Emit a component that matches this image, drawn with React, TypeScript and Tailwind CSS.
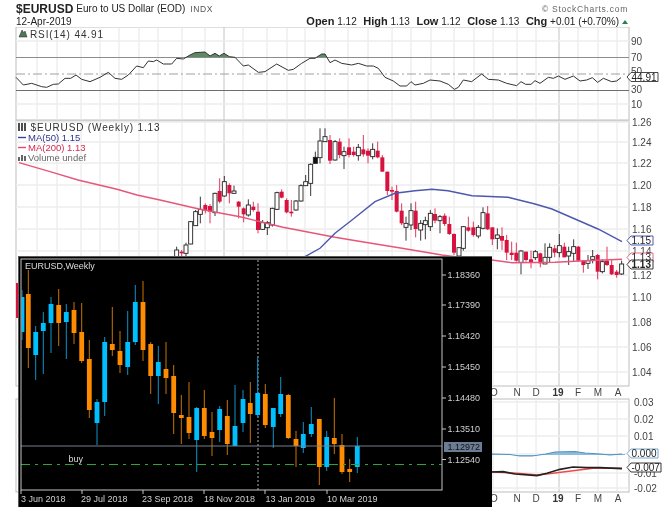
import React from "react";

// vertical grid lines of the StockCharts panes
const gridX = [37, 57, 81, 100, 119, 139, 158, 182, 205, 224, 243, 267, 287, 305, 325, 348, 368, 392, 411, 431, 454, 474, 493, 517, 536, 559, 578, 598, 617];
const priceLabels: [string, number][] = [["1.26", 122], ["1.24", 142], ["1.22", 163], ["1.20", 185], ["1.18", 207], ["1.16", 229], ["1.14", 251], ["1.12", 275], ["1.10", 297], ["1.08", 322], ["1.06", 347], ["1.04", 372]];
const macdLabels: [string, number][] = [["0.03", 402], ["0.02", 419], ["0.01", 436], ["-0.01", 473], ["-0.02", 488]];
const monthLabels: [string, number][] = [["N", 517], ["D", 536], ["F", 578], ["M", 598], ["A", 618]];

// RSI points, read at 3x from the reference
const rsiLeft = [[48, 232], [70, 255], [95, 250], [125, 260], [140, 262], [160, 253], [175, 252], [195, 235], [212, 235], [228, 225], [245, 238], [270, 245], [300, 232], [325, 217], [345, 235], [365, 238], [385, 225], [410, 198], [430, 203], [445, 183], [460, 185], [470, 180], [490, 192], [515, 192], [530, 175], [550, 177], [570, 165], [585, 158], [615, 156], [630, 168], [645, 160], [658, 168], [672, 160], [688, 170], [705, 172], [730, 198], [745, 195], [775, 217], [795, 215], [830, 192], [865, 211], [880, 208], [905, 190], [930, 175], [945, 175], [965, 162], [975, 162], [990, 188]];
const rsiRight = [[0, 180], [20, 190], [50, 195], [70, 190], [95, 198], [115, 198], [130, 205], [150, 232], [175, 243], [195, 258], [215, 258], [228, 245], [240, 255], [265, 250], [285, 240], [315, 243], [340, 253], [358, 268], [370, 262], [385, 240], [410, 245], [440, 222], [460, 238], [490, 240], [515, 250], [545, 257], [558, 245], [572, 253], [588, 253], [600, 242], [615, 250], [640, 232], [655, 235], [670, 228], [690, 238], [715, 228], [735, 243], [755, 240], [772, 233], [788, 247], [805, 235], [830, 245], [845, 243], [858, 233]];
const rsiLine = [...rsiLeft.map(([x, y]) => `${x / 3},${y / 3}`), ...rsiRight.map(([x, y]) => `${335 + x / 3},${y / 3}`)].join(" ");

const ma200 = "19,162.7 50,171.7 78,180 117,189.3 137,195 160,200 200,209.3 240,216.7 283,227.3 335,237.3 362,241.7 402,248.3 442,255 455,256.7 492,260 512,262.7 555,262.3 585,260.7 622,259.3";
const ma50 = "305,256.7 320,248.3 335,233.3 352,220 375,201.7 395,193.3 415,190.7 432,189.3 448,190.7 472,195.7 508,197.3 535,204 552,209 575,219 598,229 622,241.7";
const macdBlack = "492,472 503,471.7 515,474 537,475.7 547,473.3 560,469.3 573,467 587,467.7 600,467.7 622,468.7";
const macdRed = "492,471.7 523,473.7 537,475 553,473.3 573,470.7 593,468.3 622,468.3";

// [x, wick top, body top, body bottom, wick bottom, kind] in 3x reference units
type Bar = [number, number, number, number, number, "w" | "r" | "k"];
const barsLeft: Bar[] = [
  [530, 380, 390, 410, 410, "w"], [545, 390, 395, 400, 410, "r"], [558, 368, 375, 400, 410, "w"], [572, 303, 305, 372, 373, "w"], [587, 270, 275, 317, 318, "w"], [601, 230, 268, 283, 310, "w"],
  [616, 250, 255, 272, 280, "r"], [630, 252, 258, 275, 310, "r"], [645, 218, 220, 278, 288, "w"], [659, 175, 213, 245, 250, "r"], [673, 168, 185, 228, 230, "w"], [688, 190, 195, 220, 250, "r"],
  [702, 197, 213, 220, 220, "w"], [716, 243, 245, 260, 295, "r"], [731, 262, 265, 283, 307, "r"], [745, 238, 255, 285, 290, "w"], [760, 245, 260, 270, 275, "r"], [774, 250, 275, 330, 340, "r"],
  [788, 300, 308, 328, 330, "w"], [802, 303, 308, 323, 345, "w"], [817, 263, 265, 315, 320, "w"], [831, 215, 218, 268, 270, "w"], [845, 208, 215, 233, 235, "r"], [860, 235, 240, 277, 280, "r"],
  [874, 240, 275, 280, 290, "r"], [888, 240, 243, 270, 272, "w"], [903, 193, 197, 243, 245, "w"], [917, 165, 185, 197, 197, "w"], [932, 130, 133, 190, 228, "w"], [946, 95, 112, 130, 130, "k"],
  [960, 25, 63, 113, 130, "w"], [975, 25, 50, 65, 65, "w"], [990, 45, 60, 122, 132, "r"],
];
const barsRight: Bar[] = [
  [0, 60, 65, 120, 122, "w"], [14, 55, 65, 105, 115, "r"], [27, 80, 95, 107, 147, "w"], [42, 55, 82, 105, 112, "r"], [56, 80, 95, 105, 110, "r"], [70, 72, 82, 107, 122, "w"], [85, 45, 88, 103, 110, "r"],
  [99, 85, 92, 107, 130, "r"], [113, 70, 88, 110, 118, "w"], [128, 65, 92, 112, 115, "r"], [142, 105, 112, 155, 155, "r"], [157, 155, 155, 213, 225, "r"], [171, 200, 210, 215, 240, "r"],
  [185, 195, 213, 275, 277, "r"], [200, 250, 272, 310, 315, "r"], [213, 290, 310, 322, 362, "w"], [228, 250, 272, 315, 330, "w"], [242, 245, 272, 327, 352, "r"], [257, 300, 310, 330, 362, "w"],
  [271, 290, 302, 314, 358, "w"], [286, 270, 280, 320, 333, "w"], [300, 265, 282, 302, 310, "r"], [315, 285, 290, 302, 340, "w"], [329, 280, 287, 312, 318, "r"], [343, 290, 312, 342, 345, "r"],
  [357, 340, 342, 398, 405, "r"], [372, 383, 383, 408, 408, "w"], [385, 318, 320, 385, 392, "w"], [400, 290, 322, 332, 335, "r"], [415, 305, 322, 345, 350, "r"], [430, 315, 322, 348, 355, "w"],
  [444, 262, 278, 325, 328, "w"], [458, 258, 280, 328, 330, "r"], [472, 322, 322, 358, 375, "r"], [487, 325, 345, 355, 388, "w"], [501, 322, 348, 362, 390, "r"], [515, 345, 360, 398, 420, "r"],
  [530, 365, 398, 405, 420, "r"], [544, 368, 398, 422, 425, "r"], [558, 390, 393, 427, 463, "w"], [573, 395, 395, 420, 425, "r"], [588, 392, 418, 428, 445, "r"], [601, 390, 395, 413, 420, "w"],
  [616, 398, 400, 430, 442, "r"], [630, 370, 412, 432, 432, "w"], [644, 370, 382, 412, 428, "w"], [659, 375, 385, 398, 412, "r"], [673, 342, 377, 398, 412, "w"], [688, 368, 380, 412, 412, "r"],
  [701, 380, 395, 408, 435, "w"], [716, 358, 380, 400, 425, "w"], [730, 378, 380, 422, 425, "r"], [745, 420, 422, 435, 458, "r"], [759, 405, 422, 430, 447, "w"], [773, 390, 410, 418, 430, "w"],
  [788, 402, 405, 455, 478, "r"], [802, 418, 425, 455, 460, "w"], [816, 380, 422, 435, 438, "r"], [830, 420, 435, 463, 465, "r"], [845, 450, 455, 465, 473, "r"], [860, 422, 432, 462, 465, "w"],
];

// metatrader window candles, real pixels: [x, wick top, body top, body bottom, wick bottom, kind]
type Mt = [number, number, number, number, number, "o" | "b"];
const mtBars: Mt[] = [
  [22, 290, 297, 332, 340, "b"], [28.3, 270, 294, 348, 368, "o"], [35.7, 326, 332, 355, 380, "b"], [43.3, 312, 323, 331, 374, "b"], [51, 297, 304, 323, 353, "b"], [58.7, 289, 305, 323, 346, "o"],
  [66.3, 304, 312, 322, 359, "b"], [74, 302, 310, 333, 344, "o"], [81.7, 303, 332, 361, 363, "o"], [89.3, 340, 359, 410, 418, "o"], [97, 399, 402, 423, 445, "b"], [104.7, 337, 342, 402, 416, "b"],
  [112.3, 307, 344, 350, 356, "o"], [120, 331, 351, 365, 373, "o"], [127.7, 311, 342, 367, 375, "b"], [135.3, 285, 302, 342, 345, "b"], [143, 281, 302, 350, 361, "o"], [150.7, 342, 344, 376, 394, "o"],
  [158.3, 346, 362, 376, 404, "b"], [166, 342, 369, 378, 394, "o"], [173.7, 365, 376, 413, 434, "o"], [181.3, 395, 415, 418, 444, "o"], [189, 382, 417, 433, 439, "o"], [196.7, 407, 408, 440, 472, "b"],
  [204.3, 390, 408, 436, 439, "o"], [212, 412, 432, 438, 456, "o"], [219.7, 406, 409, 430, 442, "b"], [227.3, 400, 416, 444, 455, "o"], [235, 385, 426, 446, 446, "b"], [243, 390, 399, 423, 432, "b"],
  [250.3, 382, 403, 414, 443, "o"], [257.7, 358, 393, 415, 417, "b"], [265.3, 384, 394, 425, 428, "o"], [273.3, 408, 408, 427, 448, "b"], [280.7, 377, 394, 414, 417, "b"], [288.3, 394, 395, 438, 439, "o"],
  [296, 431, 439, 446, 467, "o"], [303.3, 422, 434, 448, 453, "b"], [311.3, 407, 424, 434, 437, "b"], [319.3, 419, 419, 467, 485, "o"], [326.7, 431, 437, 467, 471, "b"], [334.3, 398, 438, 444, 454, "o"],
  [342, 434, 445, 472, 474, "o"], [349.7, 459, 469, 472, 482, "o"], [357.3, 437, 446, 467, 473, "b"],
];
const mtPrices: [string, number][] = [["1.18360", 275], ["1.17390", 305], ["1.16420", 336], ["1.15450", 367], ["1.14480", 398], ["1.13510", 429], ["1.12540", 459.5]];
const mtDates: [string, number, number][] = [["3 Jun 2018", 21, 21], ["29 Jul 2018", 81, 82], ["23 Sep 2018", 142, 143], ["18 Nov 2018", 204, 204], ["13 Jan 2019", 265.5, 265], ["10 Mar 2019", 327, 327]];

function StockBar({ bar, ox, oy }: { bar: Bar; ox: number; oy: number }) {
  const [xz, wt, bt, bb, wb, kind] = bar;
  const x = ox + xz / 3;
  const wick = kind === "r" ? "#e0204c" : "#222";
  const fill = kind === "w" ? "#fff" : kind === "r" ? "#d8123e" : "#111";
  return (
    <g>
      <line x1={x} x2={x} y1={oy + wt / 3} y2={oy + wb / 3} stroke={wick} strokeWidth="0.9" />
      <rect x={x - 2} y={oy + bt / 3} width="4" height={Math.max((bb - bt) / 3, 1)} fill={fill} stroke={kind === "r" ? "none" : "#222"} strokeWidth="0.9" />
    </g>
  );
}

function Tag({ x, y, w, label, color, bold }: { x: number; y: number; w: number; label: string; color: string; bold?: boolean }) {
  return (
    <g>
      <polygon points={`${x},${y} ${x + 4},${y - 4.5} ${x + w},${y - 4.5} ${x + w},${y + 4.5} ${x + 4},${y + 4.5}`} fill="#fff" stroke={color} strokeWidth="0.9" />
      <text x={x + 4.5} y={y + 3.5} fontSize="10" fill="#222" fontWeight={bold ? "bold" : "normal"}>{label}</text>
    </g>
  );
}

function StockChart() {
  return (
    <svg className="block w-[670px] h-[480px]" viewBox="0 27 670 480">
      <defs>
        <clipPath id="rsiTop"><rect x="16" y="27" width="613" height="30" /></clipPath>
      </defs>

      {/* panes */}
      {[[27, 93], [121, 265], [399, 93]].map(([top, h]) => (
        <rect key={top} x="16" y={top} width="613" height={h} fill="#fff" stroke="#bdbdbd" strokeWidth="1" />
      ))}
      {gridX.map((x) => {
        const strong = x === 224 || x === 559;
        return (
          <g key={x} stroke={strong ? "#c4c4c4" : "#e6e6e6"} strokeWidth="1">
            <line x1={x} x2={x} y1="27" y2="120" />
            <line x1={x} x2={x} y1="121" y2="386" />
            <line x1={x} x2={x} y1="399" y2="492" />
          </g>
        );
      })}
      {[41, 104, 122, 142, 163, 185, 207, 229, 251, 275, 297, 322, 347, 372, 402, 419, 436, 454, 473, 488].map((y) => (
        <line key={y} x1="16" x2="629" y1={y} y2={y} stroke="#ececec" strokeWidth="1.6" />
      ))}

      {/* RSI */}
      <polygon points={`16,90 ${rsiLine} 622,90`} fill="#5c8a62" clipPath="url(#rsiTop)" />
      <line x1="16" x2="629" y1="57.5" y2="57.5" stroke="#8c8c8c" />
      <line x1="16" x2="629" y1="74" y2="74" stroke="#a0a0a0" strokeDasharray="9 3 2 3" />
      <line x1="16" x2="629" y1="90.5" y2="90.5" stroke="#6e6e6e" />
      <polyline points={rsiLine} fill="none" stroke="#333" strokeWidth="1" />
      <path d="M19 37 L22 30 L24 33 L25 31 L27 37 Z" fill="#4d7a54" stroke="#222" strokeWidth="0.5" />
      <text x="30" y="37.5" fontSize="10" fill="#333" letterSpacing="0.9">RSI(14) 44.91</text>
      {[["90", 41], ["70", 57], ["30", 89], ["10", 104]].map(([t, y]) => (
        <text key={t} x="631" y={Number(y) + 3.5} fontSize="10" fill="#444">{t}</text>
      ))}
      <text x="631" y="75" fontSize="10" fill="#444">50</text>
      <Tag x={627} y={77} w={31} label="44.91" color="#333" />

      {/* price */}
      {barsLeft.map((b) => <StockBar key={`l${b[0]}`} bar={b} ox={0} oy={120} />)}
      {barsRight.map((b) => <StockBar key={`r${b[0]}`} bar={b} ox={335} oy={120} />)}
      <polyline points={ma200} fill="none" stroke="#e8557a" strokeWidth="1.4" />
      <polyline points={ma50} fill="none" stroke="#4c58ae" strokeWidth="1.4" />
      <rect x="16" y="283" width="2" height="35" fill="#d8123e" />

      <path d="M19 123 v8 M22 123 v8 M25 123 v8" stroke="#222" strokeWidth="1.6" />
      <text x="30.5" y="130.5" fontSize="10" fill="#333" letterSpacing="0.85">$EURUSD (Weekly) 1.13</text>
      <line x1="18" x2="26" y1="137.5" y2="137.5" stroke="#3b3f9e" strokeWidth="1.4" />
      <text x="28" y="141" fontSize="9.5" fill="#2d3590">MA(50) 1.15</text>
      <line x1="18" x2="26" y1="147.5" y2="147.5" stroke="#e8476f" strokeWidth="1.4" />
      <text x="28" y="151" fontSize="9.5" fill="#d8284f">MA(200) 1.13</text>
      <path d="M19 161 v-4 M22 161 v-6 M25 161 v-5" stroke="#666" strokeWidth="2" />
      <text x="28" y="161" fontSize="9.5" fill="#666">Volume undef</text>

      {priceLabels.map(([t, y]) => (
        <text key={t} x="632" y={y + 3.5} fontSize="10" fill="#444">{t}</text>
      ))}
      <Tag x={627} y={240.5} w={26} label="1.15" color="#3b46b0" />
      <Tag x={627} y={257.5} w={26} label="1.13" color="#e8557a" />
      <Tag x={627} y={264.5} w={26} label="1.13" color="#222" bold />

      {/* month labels of both panes */}
      {[396, 502].map((y) => (
        <g key={y} fontSize="10" fill="#444" textAnchor="middle">
          {monthLabels.map(([t, x]) => <text key={t} x={x} y={y}>{t}</text>)}
          <text x="558" y={y} fontWeight="bold" fill="#333">19</text>
          <text x="494" y={y}>O</text>
        </g>
      ))}

      {/* MACD */}
      <polygon points="492,454 510,454.5 520,456 532,456 546,454 555,452 575,451.5 585,453 600,454 625,454 625,455 492,455" fill="#8fbcd9" />
      <polyline points="492,454 510,454.5 520,456 532,456 546,454 555,452 575,451.5 585,453 600,454 610,455 622,454" fill="none" stroke="#4f94c0" strokeWidth="1.2" />
      <polyline points={macdRed} fill="none" stroke="#ee4a4a" strokeWidth="1.6" />
      <polyline points={macdBlack} fill="none" stroke="#222" strokeWidth="1.7" />
      {macdLabels.map(([t, y]) => (
        <text key={t} x="634" y={y + 3.5} fontSize="10" fill="#444">{t}</text>
      ))}
      <Tag x={627} y={453.5} w={31} label="0.000" color="#6b9fc8" />
      <Tag x={627} y={467.5} w={34} label="-0.007" color="#222" />
    </svg>
  );
}

function TerminalWindow() {
  return (
    <div className="absolute left-[18px] top-[256px] w-[474px] h-[251px] box-border bg-black border-t border-l border-[#5a5a5a]">
      <svg className="block w-[473px] h-[250px]" viewBox="19 257 473 250">
        <defs>
          <clipPath id="mtFrame"><rect x="21.5" y="259.5" width="420" height="230" /></clipPath>
        </defs>
        <line x1="258" x2="258" y1="260" y2="490" stroke="#b0b0b0" strokeDasharray="2 2" />
        <g clipPath="url(#mtFrame)">
          {mtBars.map(([x, wt, bt, bb, wb, kind]) => (
            <g key={x}>
              <line x1={x} x2={x} y1={wt} y2={wb} stroke={kind === "o" ? "#c97400" : "#0c93c8"} strokeWidth="1" />
              <rect x={x - 2.4} y={bt} width="4.8" height={bb - bt} fill={kind === "o" ? "#ff8c00" : "#00bfff"} />
            </g>
          ))}
        </g>
        <line x1="21" x2="442" y1="446" y2="446" stroke="#77808f" strokeWidth="1" />
        <line x1="21" x2="442" y1="464.5" y2="464.5" stroke="#2aa63a" strokeDasharray="9 5 3 5" />
        <rect x="21" y="259" width="421" height="231" fill="none" stroke="#c4c4c4" strokeWidth="1" />
        <text x="25" y="269" fontSize="9" fill="#ddd">EURUSD,Weekly</text>
        <text x="68.5" y="462" fontSize="9" fill="#ddd">buy</text>
        {mtPrices.map(([t, y]) => (
          <g key={t}>
            <line x1="442" x2="446" y1={y} y2={y} stroke="#c4c4c4" />
            <text x="447.5" y={y + 3.3} fontSize="9" fill="#d0d0d0">{t}</text>
          </g>
        ))}
        <rect x="444" y="442" width="38" height="10" fill="#6b7d96" />
        <text x="447.5" y="450.3" fontSize="9" fill="#111">1.12972</text>
        {mtDates.map(([t, x, tick]) => (
          <g key={t}>
            <line x1={tick} x2={tick} y1="490" y2="494" stroke="#c4c4c4" />
            <text x={x} y="502" fontSize="9" fill="#d0d0d0">{t}</text>
          </g>
        ))}
      </svg>
    </div>
  );
}

export default function App() {
  return (
    <div className="relative w-[670px] h-[507px] overflow-hidden bg-white font-['Liberation_Sans',Arial,sans-serif] blur-[0.4px]">
      {/* Title rows */}
      <div className="h-[27px] pl-4 pr-[42px] text-[#222]">
        <div className="flex items-center h-[15px] pt-[3px]">
          <span className="text-[12px] font-bold leading-none">$EURUSD</span>
          <span className="ml-[3px] text-[10px] leading-none">Euro to US Dollar (EOD)</span>
          <span className="ml-[5px] text-[8.5px] leading-none tracking-[0.6px] text-[#555]">INDX</span>
          <span className="ml-auto text-[8.5px] leading-none tracking-[0.75px] text-[#666]">© StockCharts.com</span>
        </div>
        <div className="flex items-center h-[12px] text-[10px] leading-none pt-[1px]">
          <span>12-Apr-2019</span>
          <div className="ml-auto flex items-center gap-[6.5px]">
            <span><b className="text-[11px]">Open</b> 1.12</span>
            <span><b className="text-[11px]">High</b> 1.13</span>
            <span><b className="text-[11px]">Low</b> 1.12</span>
            <span><b className="text-[11px]">Close</b> 1.13</span>
            <span><b className="text-[11px]">Chg</b> +0.01 (+0.70%)</span>
          </div>
          <span className="ml-[3px] w-0 h-0 border-x-[3px] border-x-transparent border-b-[4px] border-b-[#2e7d4f]" />
        </div>
      </div>

      <StockChart />
      <TerminalWindow />
    </div>
  );
}
